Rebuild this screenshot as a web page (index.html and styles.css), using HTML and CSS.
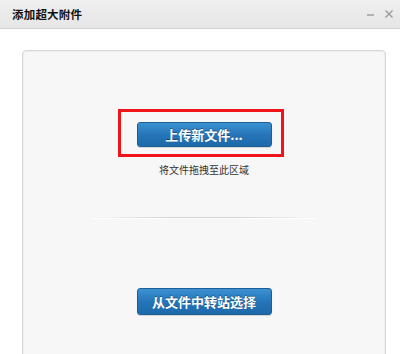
FILE: index.html
```html
<!DOCTYPE html>
<html lang="zh">
<head>
<meta charset="utf-8">
<link rel="stylesheet" href="styles.css">
</head>
<body>
<div class="dialog">
  <div class="titlebar">
    <span class="title">添加超大附件</span>
    <div class="controls">
      <svg class="ctl" width="9" height="9" viewBox="0 0 9 9"><path d="M1 5h7" stroke="#9a9a9a" stroke-width="1.4"/></svg>
      <svg class="ctl" width="10" height="10" viewBox="0 0 10 10"><path d="M1.5 1.5l7 7M8.5 1.5l-7 7" stroke="#9a9a9a" stroke-width="1.4"/></svg>
    </div>
  </div>
  <div class="content">
    <div class="card">
      <div class="highlight">
        <button class="btn">上传新文件...</button>
      </div>
      <div class="hint">将文件拖拽至此区域</div>
      <div class="divider"></div>
      <button class="btn btn2">从文件中转站选择</button>
    </div>
  </div>
</div>
</body>
</html>
```
FILE: styles.css
```css
html, body {
  margin: 0;
  padding: 0;
  background: #ffffff;
  font-family: "Noto Sans CJK SC", "Liberation Sans", sans-serif;
  overflow: hidden;
}
.dialog {
  width: 400px;
  height: 354px;
  display: flex;
  flex-direction: column;
  overflow: hidden;
}
.titlebar {
  flex-shrink: 0;
  height: 29px;
  box-sizing: border-box;
  background: linear-gradient(#efefef, #e6e6e6);
  border-bottom: 1px solid #d2d2d2;
  display: flex;
  align-items: center;
  justify-content: space-between;
  padding: 0 6px 0 12px;
}
.title {
  font-size: 11.5px;
  font-weight: bold;
  color: #111;
  letter-spacing: 0.2px;
}
.controls {
  display: flex;
  align-items: center;
  gap: 9px;
}
.content {
  flex-shrink: 0;
  padding: 21px 14px 0 22px;
}
.card {
  width: 364px;
  height: 330px;
  box-sizing: border-box;
  background: #f7f7f7;
  border: 1px solid #d9d9d9;
  border-radius: 4px;
  box-shadow: inset 0 0 0 1px #ececec;
  display: flex;
  flex-direction: column;
  align-items: center;
  padding-top: 58px;
}
.highlight {
  border: 3px solid #f0151b;
  padding: 10px 9px 7px 16px;
  margin-left: -7px;
  display: flex;
}
.btn {
  width: 135px;
  height: 25px;
  box-sizing: border-box;
  border: 1px solid #1b5e98;
  border-radius: 3px;
  background: linear-gradient(#3b91d2, #2474b7 55%, #1d69aa);
  color: #fff;
  font-family: "Noto Sans CJK SC", "Liberation Sans", sans-serif;
  font-size: 13px;
  font-weight: bold;
  text-shadow: 0 -1px 0 rgba(0, 0, 0, 0.35);
  padding: 0;
  box-shadow: 0 1px 1px rgba(0, 0, 0, 0.15);
}
.hint {
  margin-top: 6px;
  font-size: 10px;
  line-height: 14px;
  color: #333;
}
.divider {
  margin-top: 40px;
  width: 224px;
  height: 1px;
  background: linear-gradient(90deg, rgba(210,210,210,0), #d2d2d2 35%, #d2d2d2 65%, rgba(210,210,210,0));
  box-shadow: 0 1px 0 #ffffff;
}
.btn2 {
  margin-top: 70px;
  height: 27px;
}
```
